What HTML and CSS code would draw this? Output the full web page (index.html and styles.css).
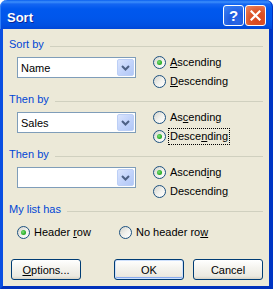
FILE: index.html
```html
<!DOCTYPE html>
<html lang="en">
<head>
    <meta charset="UTF-8">
    <title>Sort</title>
    <link rel="stylesheet" href="styles.css">
</head>
<body>
<div class="window">
    <div class="titlebar">
        <span class="title">Sort</span>
        <div class="caption-btn help">?</div>
        <div class="caption-btn close">
            <svg width="11" height="11" viewBox="0 0 11 11"><path d="M1.5 1.5L9.5 9.5M9.5 1.5L1.5 9.5" stroke="#fff" stroke-width="2.2" stroke-linecap="square"/></svg>
        </div>
    </div>
    <div class="client">
        <div class="group">
            <div class="group-title">Sort by</div>
            <div class="group-body">
                <div class="combo"><span class="combo-text">Name</span><span class="combo-btn"><svg width="9" height="6" viewBox="0 0 9 6"><path d="M1 1L4.5 4.5L8 1" fill="none" stroke="#4d6185" stroke-width="2"/></svg></span></div>
                <div class="radios">
                    <div class="radio"><span class="dot checked"></span><span class="label-text"><u>A</u>scending</span></div>
                    <div class="radio"><span class="dot"></span><span class="label-text"><u>D</u>escending</span></div>
                </div>
            </div>
        </div>
        <div class="group">
            <div class="group-title">Then by</div>
            <div class="group-body">
                <div class="combo"><span class="combo-text">Sales</span><span class="combo-btn"><svg width="9" height="6" viewBox="0 0 9 6"><path d="M1 1L4.5 4.5L8 1" fill="none" stroke="#4d6185" stroke-width="2"/></svg></span></div>
                <div class="radios">
                    <div class="radio"><span class="dot"></span><span class="label-text">As<u>c</u>ending</span></div>
                    <div class="radio"><span class="dot checked"></span><span class="label-text focus">Desce<u>n</u>ding</span></div>
                </div>
            </div>
        </div>
        <div class="group">
            <div class="group-title">Then by</div>
            <div class="group-body">
                <div class="combo"><span class="combo-text"></span><span class="combo-btn"><svg width="9" height="6" viewBox="0 0 9 6"><path d="M1 1L4.5 4.5L8 1" fill="none" stroke="#4d6185" stroke-width="2"/></svg></span></div>
                <div class="radios">
                    <div class="radio"><span class="dot checked"></span><span class="label-text">Ascend<u>i</u>ng</span></div>
                    <div class="radio"><span class="dot"></span><span class="label-text">Descendin<u>g</u></span></div>
                </div>
            </div>
        </div>
        <div class="group last">
            <div class="group-title">My list has</div>
            <div class="header-row">
                <div class="radio wide"><span class="dot checked"></span><span class="label-text">Header <u>r</u>ow</span></div>
                <div class="radio"><span class="dot"></span><span class="label-text">No header ro<u>w</u></span></div>
            </div>
        </div>
        <div class="buttons">
            <div class="btn"><span><u>O</u>ptions...</span></div>
            <div class="btn default push-right">OK</div>
            <div class="btn">Cancel</div>
        </div>
    </div>
</div>
</body>
</html>
```

FILE: styles.css
```css
* {
    box-sizing: border-box;
}

html, body {
    margin: 0;
    background: #fff;
}

body {
    font-family: "Liberation Sans", Arial, sans-serif;
    font-size: 11px;
    color: #000;
}

.window {
    width: 273px;
    height: 289px;
    display: flex;
    flex-direction: column;
}

/* title bar */
.titlebar {
    height: 29px;
    flex: none;
    display: flex;
    align-items: flex-start;
    border-radius: 7px 7px 0 0;
    background: linear-gradient(#0a5fef 0, #3d8ffb 2px, #1466f2 4px, #0058ee 9px, #0056eb 18px, #0050e2 25px, #0046d8 29px);
    box-shadow: inset 1px 0 #2f7ff8, inset -1px 0 #0032c0;
}

.title {
    flex: 1;
    color: #fff;
    font-weight: bold;
    font-size: 13px;
    line-height: 15px;
    padding: 10px 0 0 7px;
    text-shadow: 1px 1px #0b2596;
}

.caption-btn {
    width: 21px;
    height: 21px;
    margin-top: 5px;
    border: 1px solid #fff;
    border-radius: 3px;
}

.help {
    margin-right: 1px;
    background: radial-gradient(circle at 70% 80%, #2a66e6 0, #1f5ce0 40%, #3f85f5 100%);
    color: #fff;
    font-weight: bold;
    font-size: 15px;
    line-height: 19px;
    text-align: center;
}

.close {
    margin-right: 7px;
    display: flex;
    align-items: center;
    justify-content: center;
    background: radial-gradient(circle at 65% 75%, #d8461f 0, #dc5328 45%, #ec8a63 100%);
}

/* dialog body */
.client {
    flex: 1;
    background: #ece9d8;
    border-style: solid;
    border-width: 0 4px 3px 3px;
    border-color: #0a4fe2 #0035c4 #0030bb #0a4fe2;
    padding: 9px 6px 0;
}

.group {
    margin-bottom: 2px;
}

.group-title {
    display: flex;
    height: 13px;
    line-height: 13px;
    color: #0046d5;
}

.group-title::after {
    content: "";
    flex: 1;
    height: 1px;
    margin: 8px 0 0 6px;
    background: #d0d0bf;
}

.group-body {
    display: flex;
    height: 38px;
    margin-top: 2px;
    padding-left: 8px;
}

.combo {
    width: 119px;
    height: 21px;
    margin-top: 4px;
    display: flex;
    align-items: center;
    background: #fff;
    border: 1px solid #7f9db9;
    padding: 1px;
}

.combo-text {
    flex: 1;
    padding-left: 2px;
}

.combo-btn {
    width: 17px;
    height: 17px;
    display: flex;
    align-items: center;
    justify-content: center;
    border: 1px solid #bccff6;
    border-radius: 2px;
    background: linear-gradient(135deg, #dbe5fd 0, #c3d4fb 50%, #b1c7f6 100%);
}

.radios {
    margin-left: 17px;
}

.radio {
    display: flex;
    align-items: center;
    height: 19px;
}

.dot {
    width: 13px;
    height: 13px;
    border: 1px solid #1c5180;
    border-radius: 50%;
    background: linear-gradient(135deg, #d4d4cc 0, #f2f2ee 55%, #fff 100%);
    display: flex;
    align-items: center;
    justify-content: center;
}

.dot.checked::after {
    content: "";
    width: 5px;
    height: 5px;
    border-radius: 50%;
    background: radial-gradient(circle at 40% 40%, #7ee07a 0, #2aae28 60%, #1b8e1b 100%);
}

.label-text {
    margin-left: 2px;
    padding: 0 1px;
    line-height: 15px;
    border: 1px solid transparent;
}

.label-text.focus {
    border: 1px dotted #000;
}

.header-row {
    display: flex;
    margin-top: 7px;
    padding-left: 8px;
}

.radio.wide {
    width: 102px;
}

/* command buttons */
.buttons {
    display: flex;
    margin-top: 17px;
    padding-left: 2px;
}

.btn {
    width: 70px;
    height: 21px;
    display: flex;
    align-items: center;
    justify-content: center;
    border: 1px solid #003c74;
    border-radius: 3px;
    background: linear-gradient(#ffffff 0, #f5f4ef 40%, #ebe9e1 85%, #d8d3c6 100%);
}

.btn + .btn {
    margin-left: 9px;
}

.btn.push-right {
    margin-left: auto;
}

.btn.default {
    box-shadow: inset 0 0 0 1px #cee0fc, inset 0 -1px 0 1px #8aacf0;
}
```
